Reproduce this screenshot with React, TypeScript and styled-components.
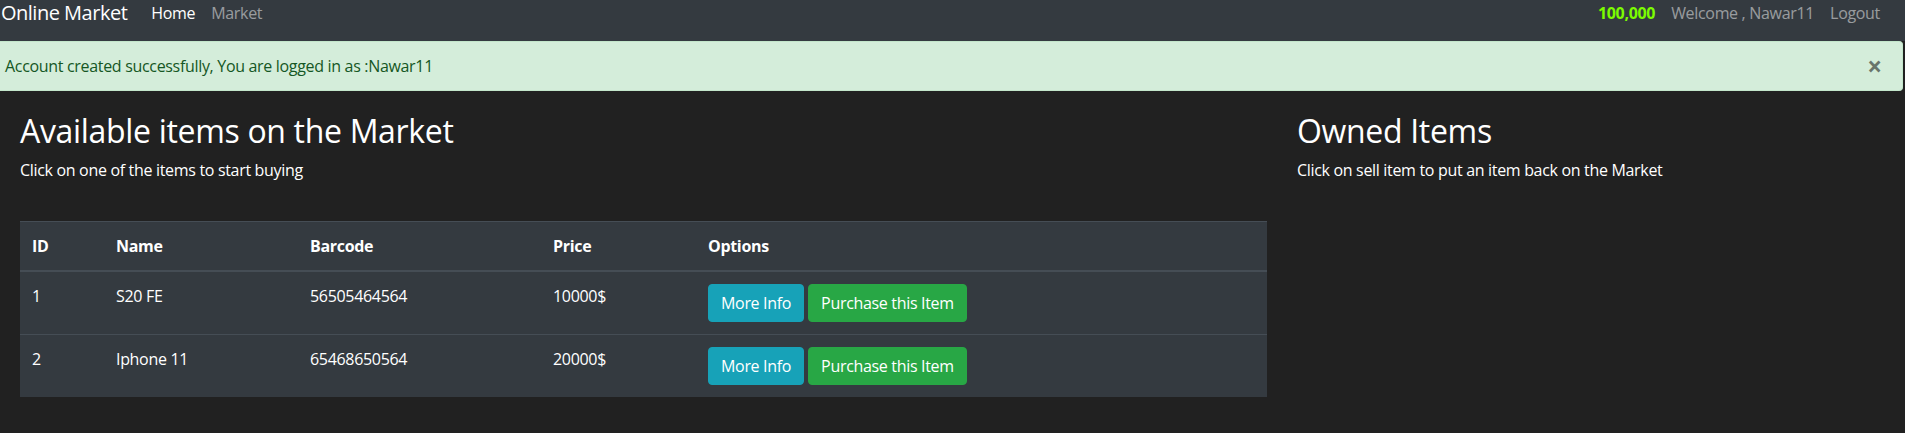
import styled, { createGlobalStyle } from "styled-components";

const GlobalStyle = createGlobalStyle`
  body {
    margin: 0;
    background: #212121;
    color: #fff;
    font-family: "Open Sans", "Noto Sans", sans-serif;
    font-size: 16px;
    line-height: 24px;
    letter-spacing: -0.02em;
  }
  * { box-sizing: border-box; }
`;

const S_Navbar = styled.nav`
  display: flex;
  align-items: flex-start;
  height: 41px;
  padding: 1px 17px 0 0;
  background: #343a40;
`;

const S_Brand = styled.a`
  margin: -1px 16px 0 1px;
  font-size: 20px;
  line-height: 26px;
  letter-spacing: -0.025em;
  color: #fff;
  text-decoration: none;
`;

const S_NavGroup = styled.div<{ $right?: boolean }>`
  display: flex;
  margin-left: ${(p) => (p.$right ? "auto" : "0")};
`;

const S_NavLink = styled.a<{ $active?: boolean }>`
  padding: 0 8px;
  color: ${(p) => (p.$active ? "#fff" : "rgba(255, 255, 255, 0.5)")};
  text-decoration: none;
`;

const S_Budget = styled.span`
  padding: 0 8px;
  color: #7cfc00;
  font-weight: 700;
`;

const S_Alert = styled.div`
  display: flex;
  justify-content: space-between;
  align-items: flex-start;
  width: 1903px;
  padding: 12px 20px 12px 5px;
  background: #d4edda;
  border: 1px solid #c3e6cb;
  border-left: none;
  border-radius: 0 4px 4px 0;
  color: #155724;
`;

const S_Close = styled.button`
  padding: 0;
  border: none;
  background: none;
  font-family: inherit;
  font-size: 26px;
  font-weight: 700;
  line-height: 24px;
  color: #000;
  opacity: 0.5;
`;

const S_Main = styled.main`
  display: grid;
  grid-template-columns: 1247px 1fr;
  column-gap: 30px;
  padding: 21px 20px 0;
`;

const S_Title = styled.h2`
  margin: 0 0 8px;
  font-size: 32px;
  font-weight: 500;
  line-height: 38.4px;
  letter-spacing: -0.01em;
`;

const S_Lead = styled.p`
  margin: 0 0 16px;
`;

const S_Table = styled.table`
  width: 100%;
  margin-top: 39px;
  border-collapse: collapse;
  background: #343a40;
  color: #fff;

  th,
  td {
    padding: 12px;
    text-align: left;
    vertical-align: top;
    border-top: 1px solid #454d55;
  }

  thead th {
    font-weight: 700;
    border-bottom: 2px solid #454d55;
  }
`;

const S_Button = styled.button<{ $variant: "info" | "success" }>`
  margin-right: 4px;
  padding: 6px 12px;
  border: 1px solid ${(p) => (p.$variant === "info" ? "#17a2b8" : "#28a745")};
  border-radius: 4px;
  background: ${(p) => (p.$variant === "info" ? "#17a2b8" : "#28a745")};
  color: #fff;
  font-family: inherit;
  font-size: 16px;
  line-height: 24px;
  letter-spacing: -0.02em;
`;

const items = [
  { id: 1, name: "S20 FE", barcode: "56505464564", price: "10000$" },
  { id: 2, name: "Iphone 11", barcode: "65468650564", price: "20000$" },
];

const App = () => {
  return (
    <>
      <GlobalStyle />
      <S_Navbar>
        <S_Brand href="#">Online Market</S_Brand>
        <S_NavGroup>
          <S_NavLink $active href="#">Home</S_NavLink>
          <S_NavLink href="#">Market</S_NavLink>
        </S_NavGroup>
        <S_NavGroup $right>
          <S_Budget>100,000</S_Budget>
          <S_NavLink href="#">Welcome , Nawar11</S_NavLink>
          <S_NavLink href="#">Logout</S_NavLink>
        </S_NavGroup>
      </S_Navbar>
      <S_Alert>
        <span>Account created successfully, You are logged in as :Nawar11</span>
        <S_Close>×</S_Close>
      </S_Alert>
      <S_Main>
        <section>
          <S_Title>Available items on the Market</S_Title>
          <S_Lead>Click on one of the items to start buying</S_Lead>
          <S_Table>
            <thead>
              <tr>
                <th style={{ width: 84 }}>ID</th>
                <th style={{ width: 194 }}>Name</th>
                <th style={{ width: 243 }}>Barcode</th>
                <th style={{ width: 155 }}>Price</th>
                <th>Options</th>
              </tr>
            </thead>
            <tbody>
              {items.map((item) => (
                <tr key={item.id}>
                  <td>{item.id}</td>
                  <td>{item.name}</td>
                  <td>{item.barcode}</td>
                  <td>{item.price}</td>
                  <td>
                    <S_Button $variant="info">More Info</S_Button>
                    <S_Button $variant="success">Purchase this Item</S_Button>
                  </td>
                </tr>
              ))}
            </tbody>
          </S_Table>
        </section>
        <section>
          <S_Title>Owned Items</S_Title>
          <S_Lead>Click on sell item to put an item back on the Market</S_Lead>
        </section>
      </S_Main>
    </>
  );
};

export default App;
